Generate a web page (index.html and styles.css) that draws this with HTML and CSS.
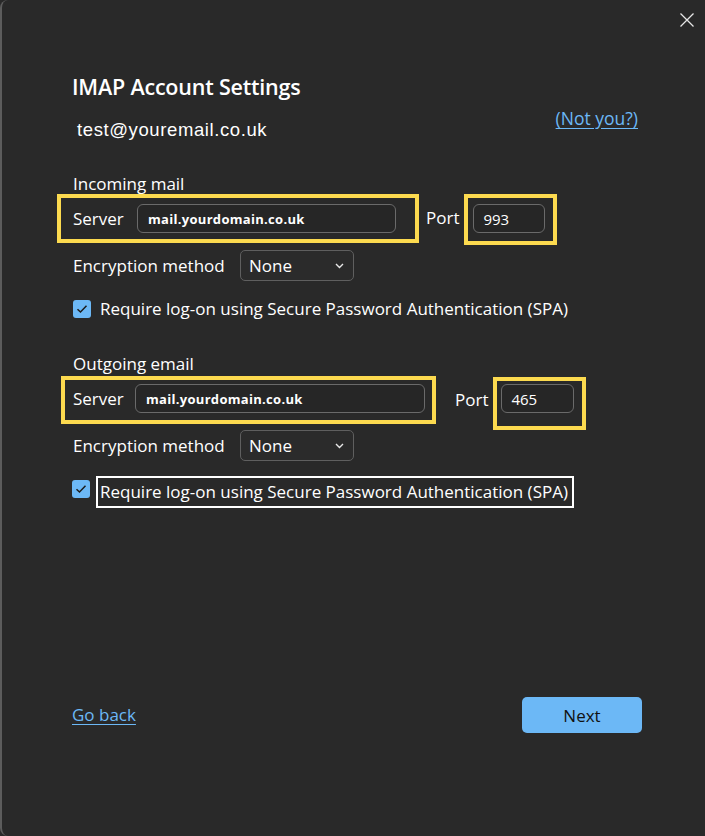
FILE: index.html
```html
<!DOCTYPE html>
<html lang="en">
<head>
<meta charset="utf-8">
<title>IMAP Account Settings</title>
<link rel="stylesheet" href="styles.css">
</head>
<body>
<div class="window">
  <div class="topbar">
    <button class="close" aria-label="Close">
      <svg width="14" height="14" viewBox="0 0 14 14"><path d="M0.5 0.5 L13.5 13.5 M13.5 0.5 L0.5 13.5" stroke="#e6e6e6" stroke-width="1.3" fill="none"/></svg>
    </button>
  </div>

  <h1 class="title">IMAP Account Settings</h1>

  <div class="account-row">
    <span class="email">test@youremail.co.uk</span>
    <a class="link notyou" href="#">(Not you?)</a>
  </div>

  <section class="group group-in">
    <div class="group-label">Incoming mail</div>
    <div class="server-row">
      <div class="hl hl-server hl-server-in">
        <span class="field-label">Server</span>
        <div class="input input-server-in">mail.yourdomain.co.uk</div>
      </div>
      <span class="port-label port-label-in">Port</span>
      <div class="hl hl-port hl-port-in">
        <div class="input input-port">993</div>
      </div>
    </div>
    <div class="enc-row">
      <span class="enc-label">Encryption method</span>
      <div class="select"><span>None</span>
        <svg class="chev" width="9" height="6" viewBox="0 0 9 6"><path d="M1 1 L4.5 4.5 L8 1" stroke="#e8e8e8" stroke-width="1.4" fill="none"/></svg>
      </div>
    </div>
    <div class="check-row check-row-in">
      <span class="checkbox"><svg width="12" height="10" viewBox="0 0 12 10"><path d="M1.5 5.2 L4.5 8 L10.5 1.8" stroke="#1b1b1b" stroke-width="1.5" fill="none"/></svg></span>
      <span class="check-label">Require log-on using Secure Password Authentication (SPA)</span>
    </div>
  </section>

  <section class="group group-out">
    <div class="group-label">Outgoing email</div>
    <div class="server-row">
      <div class="hl hl-server hl-server-out">
        <span class="field-label">Server</span>
        <div class="input input-server-out">mail.yourdomain.co.uk</div>
      </div>
      <span class="port-label port-label-out">Port</span>
      <div class="hl hl-port hl-port-out">
        <div class="input input-port">465</div>
      </div>
    </div>
    <div class="enc-row enc-row-out">
      <span class="enc-label">Encryption method</span>
      <div class="select"><span>None</span>
        <svg class="chev" width="9" height="6" viewBox="0 0 9 6"><path d="M1 1 L4.5 4.5 L8 1" stroke="#e8e8e8" stroke-width="1.4" fill="none"/></svg>
      </div>
    </div>
    <div class="check-row check-row-out">
      <span class="checkbox"><svg width="12" height="10" viewBox="0 0 12 10"><path d="M1.5 5.2 L4.5 8 L10.5 1.8" stroke="#1b1b1b" stroke-width="1.5" fill="none"/></svg></span>
      <span class="check-label check-label-boxed">Require log-on using Secure Password Authentication (SPA)</span>
    </div>
  </section>

  <div class="footer">
    <a class="link goback" href="#">Go back</a>
    <button class="next">Next</button>
  </div>
</div>
</body>
</html>
```

FILE: styles.css
```css
* { box-sizing: border-box; }
html, body {
  margin: 0;
  padding: 0;
  background: #292929;
}
body {
  width: 705px;
  height: 836px;
  overflow: hidden;
  font-family: "Open Sans", "Noto Sans", sans-serif;
  color: #ffffff;
  font-size: 17px;
}
.window {
  height: 836px;
  display: flex;
  flex-direction: column;
  background: #292929;
  border-left: 2px solid #5c5c5c;
  border-radius: 8px 0 0 8px;
  padding: 0 67px 0 70px;
}
.topbar {
  height: 40px;
  display: flex;
  justify-content: flex-end;
  margin-right: -56px;
}
.close {
  margin-top: 13px;
  width: 14px;
  height: 14px;
  padding: 0;
  border: none;
  background: none;
  display: flex;
}
.title {
  margin: 33px 0 0 0;
  font-size: 21.5px;
  line-height: 28px;
  font-weight: 600;
  letter-spacing: -0.2px;
}
.account-row {
  margin-top: 5px;
  height: 36px;
  display: flex;
  justify-content: space-between;
  align-items: flex-start;
}
.email {
  margin: 12px 0 0 5px;
  line-height: 24px;
  font-family: "Liberation Sans", Arial, sans-serif;
  font-size: 18.5px;
  letter-spacing: 0.6px;
}
.link {
  color: #6cb8f6;
  text-decoration: underline;
  text-underline-offset: 3px;
  line-height: 24px;
  font-size: 17.5px;
}
.group-in { margin-top: 32px; }
.group-out { margin-top: 33px; }
.group-label {
  line-height: 20px;
  padding-left: 1px;
  font-size: 17px;
}
.server-row {
  display: flex;
  align-items: flex-start;
}
.hl {
  border: 4px solid #fcda4f;
  display: flex;
  align-items: center;
}
.hl-server-in {
  margin-left: -15px;
  width: 362px;
  height: 49px;
  padding: 6px 19px 6px 12px;
}
.hl-server-out {
  margin-left: -11px;
  margin-top: 2px;
  width: 375px;
  height: 48px;
  padding: 0px 7px 3px 8px;
}
.field-label {
  width: 64px;
  flex: 0 0 auto;
  font-size: 17px;
}
.hl-server-out .field-label { width: 62px; }
.input {
  border: 1px solid #6a6a6a;
  border-radius: 6px;
  height: 29px;
  display: flex;
  align-items: center;
  background: #262626;
}
.input-server-in, .input-server-out {
  flex: 1 1 auto;
  padding-left: 10px;
  font-weight: 700;
  font-size: 13px;
  letter-spacing: 0.3px;
}
.port-label {
  line-height: 48px;
  font-size: 17px;
}
.port-label-in { margin: 0 5px 0 7px; }
.port-label-out { margin: 2px 5px 0 19px; }
.hl-port {
  align-items: flex-start;
}
.hl-port-in {
  width: 93px;
  height: 51px;
  padding: 6px 8px 0 5px;
}
.hl-port-out {
  margin-top: 3px;
  width: 93px;
  height: 53px;
  padding: 3px 8px 0 4px;
}
.input-port {
  width: 100%;
  padding-left: 9px;
  font-size: 15px;
}
.enc-row {
  margin-top: 5px;
  display: flex;
  align-items: center;
  padding-left: 1px;
}
.enc-row-out { margin-top: 0; }
.enc-label {
  width: 167px;
  font-size: 17px;
}
.select {
  width: 114px;
  height: 31px;
  border: 1px solid #5f5f5f;
  border-radius: 5px;
  display: flex;
  align-items: center;
  justify-content: space-between;
  padding: 0 9px 0 8px;
  font-size: 17px;
  background: #2b2b2b;
}
.check-row {
  margin-top: 16px;
  height: 24px;
  display: flex;
  align-items: center;
}
.check-row-in { padding-left: 1px; }
.checkbox {
  width: 18px;
  height: 18px;
  border-radius: 3px;
  background: #6cb8f6;
  display: flex;
  align-items: center;
  justify-content: center;
  margin-right: 9px;
}
.check-row-out .checkbox { margin-right: 10px; }
.check-label {
  font-size: 17px;
  line-height: 24px;
  white-space: nowrap;
}
.check-label-boxed {
  display: inline-block;
  outline: 2px solid #ffffff;
  outline-offset: 2px;
  padding: 0 2px 0 0;
  margin-top: 6px;
}
.footer {
  margin-top: auto;
  margin-bottom: 103px;
  display: flex;
  justify-content: space-between;
  align-items: center;
}
.goback { font-size: 17px; }
.next {
  width: 120px;
  height: 36px;
  border: none;
  border-radius: 5px;
  background: #6cb8f6;
  color: #111111;
  font-family: "Open Sans", "Noto Sans", sans-serif;
  font-size: 17px;
  margin-right: -4px;
}
```
